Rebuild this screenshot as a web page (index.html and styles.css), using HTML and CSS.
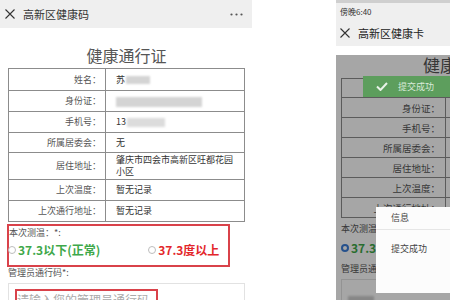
FILE: index.html
```html
<!DOCTYPE html>
<html lang="zh">
<head>
<meta charset="utf-8">
<title>健康通行证</title>
<link rel="stylesheet" href="styles.css">
</head>
<body>
<div class="screen">
  <div class="phone phone-left">
    <div class="topbar">
      <svg class="close" width="10" height="10" viewBox="0 0 10 10"><path d="M0.5 0.5 L9.5 9.5 M9.5 0.5 L0.5 9.5" stroke="#333" stroke-width="1.1" fill="none"/></svg>
      <span class="topbar-title">高新区健康码</span>
      <svg class="more" width="13" height="3" viewBox="0 0 13 3"><circle cx="1.5" cy="1.5" r="1.1" fill="#555"/><circle cx="6.5" cy="1.5" r="1.1" fill="#555"/><circle cx="11.5" cy="1.5" r="1.1" fill="#555"/></svg>
    </div>
    <div class="page">
      <h1 class="page-title">健康通行证</h1>
      <table class="info">
        <tr class="r22"><td class="lbl">姓名：</td><td class="val">苏<span class="blur blur-name"></span></td></tr>
        <tr><td class="lbl">身份证：</td><td class="val"><span class="blur blur-id"></span></td></tr>
        <tr><td class="lbl">手机号：</td><td class="val">13<span class="blur blur-phone"></span></td></tr>
        <tr class="r20"><td class="lbl">所属居委会：</td><td class="val">无</td></tr>
        <tr class="r27"><td class="lbl">居住地址：</td><td class="val">肇庆市四会市高新区旺都花园<br>小区</td></tr>
        <tr><td class="lbl">上次温度：</td><td class="val">暂无记录</td></tr>
        <tr><td class="lbl">上次通行地址：</td><td class="val">暂无记录</td></tr>
      </table>
      <div class="temp">
        <div class="field-label">本次测温：*:</div>
        <div class="temp-options">
          <span class="radio"></span><span class="opt opt-normal">37.3以下(正常)</span>
          <span class="radio radio-second"></span><span class="opt opt-high">37.3度以上</span>
        </div>
      </div>
      <div class="field-label admin-label">管理员通行码*:</div>
      <div class="input">
        <div class="input-mark">请输入您的管理员通行码</div>
      </div>
    </div>
  </div>

  <div class="phone phone-right">
    <div class="status">傍晚6:40</div>
    <div class="topbar-r">
      <svg class="close" width="10" height="10" viewBox="0 0 10 10"><path d="M0.5 0.5 L9.5 9.5 M9.5 0.5 L0.5 9.5" stroke="#333" stroke-width="1.1" fill="none"/></svg>
      <span class="topbar-title-r">高新区健康卡</span>
    </div>
    <div class="page-r">
      <h1 class="page-title-r">健康通行证</h1>
      <table class="info info-r">
        <tr class="r19"><td class="lbl lbl-r">姓名：</td><td class="val">苏</td></tr>
        <tr class="r20"><td class="lbl lbl-r">身份证：</td><td class="val"></td></tr>
        <tr class="r20"><td class="lbl lbl-r">手机号：</td><td class="val"></td></tr>
        <tr class="r20"><td class="lbl lbl-r">所属居委会：</td><td class="val">无</td></tr>
        <tr class="r20"><td class="lbl lbl-r">居住地址：</td><td class="val"></td></tr>
        <tr class="r20"><td class="lbl lbl-r">上次温度：</td><td class="val">暂无记录</td></tr>
        <tr class="r20"><td class="lbl lbl-r">上次通行地址：</td><td class="val">暂无记录</td></tr>
      </table>
      <div class="field-label temp-label-r">本次测温：*:</div>
      <div class="temp-options-r">
        <span class="radio radio-on"></span><span class="opt opt-normal">37.3以下(正常)</span>
      </div>
      <div class="field-label admin-label-r">管理员通行码*:</div>
      <div class="input-r"><span class="blur blur-input"></span></div>
      <div class="mask"></div>
    </div>
    <div class="toast">
      <svg width="12" height="9" viewBox="0 0 12 9"><path d="M1 4.5 L4.5 8 L11 1" stroke="#e8f2e8" stroke-width="2" fill="none"/></svg>
      <span class="toast-text">提交成功</span>
    </div>
    <div class="dialog">
      <div class="dialog-head">信息</div>
      <div class="dialog-body">提交成功</div>
    </div>
  </div>
</div>
</body>
</html>
```

FILE: styles.css
```css
* { box-sizing: border-box; margin: 0; padding: 0; }
html, body { width: 450px; height: 300px; overflow: hidden; background: #fff; }
body { font-family: "Noto Sans CJK SC", "Noto Sans", sans-serif; color: #333; }

.screen { display: flex; height: 300px; }
.phone { height: 300px; overflow: hidden; position: relative; flex: none; }
.phone-left { width: 252px; }
.phone-right { width: 114px; margin-left: 84px; }

/* left phone */
.topbar { height: 28px; background: #efefef; display: flex; align-items: center; padding: 0 9px 0 5px; }
.topbar-title { margin-left: 8px; font-size: 11px; color: #333; line-height: 1; }
.more { margin-left: auto; }

.page { padding: 0 7px 0 8px; }
.page-title { font-size: 16px; font-weight: normal; color: #555; text-align: center; line-height: 20px; margin: 17px 0 3px; }

.info { width: 237px; border-collapse: collapse; font-size: 9px; }
.info td { border: 1px solid #8c8c8c; line-height: 12px; vertical-align: middle; }
.info tr { height: 21px; }
.info tr.r19 { height: 19px; }
.info tr.r20 { height: 20px; }
.info tr.r22 { height: 22px; }
.info tr.r27 { height: 27px; }
.lbl { width: 97px; text-align: right; padding-right: 4px; color: #555; }
.val { padding-left: 10px; color: #333; }

.blur { display: inline-block; background: #d4d4d4; filter: blur(1.2px); vertical-align: middle; }
.blur-name { width: 24px; height: 8px; margin-left: 1px; }
.blur-id { width: 86px; height: 10px; }
.blur-phone { width: 38px; height: 9px; margin-left: 1px; background: #dcdcdc; }

.temp { margin: 2px 15px 0 -1px; border: 2px solid #d9424a; height: 43px; padding: 1px 0 0 0; }
.field-label { font-size: 9px; color: #555; line-height: 12px; }
.temp-options { display: flex; align-items: center; height: 22px; }
.radio { width: 8px; height: 8px; border: 1px solid #bdbdbd; border-radius: 50%; flex: none; margin-left: -1px; }
.radio-second { margin-left: 48px; }
.opt { font-size: 12px; font-weight: bold; line-height: 14px; margin-left: 2px; white-space: nowrap; }
.opt-normal { color: #3ea84a; }
.opt-high { color: #e3262b; }

.admin-label { margin-top: 0; }
.input { margin-top: 4px; width: 237px; height: 30px; border: 1px solid #e2e2e2; padding: 5px 0 0 6px; }
.input-mark { width: 143px; height: 24px; border: 2px solid #d9424a; border-bottom: none; font-size: 12px; line-height: 18px; color: #aaa; padding-left: 0; white-space: nowrap; }

/* right phone */
.status { height: 20px; background: #efefef; border-top: 3px solid #cfcfcf; font-size: 8px; line-height: 17px; padding-left: 4px; color: #333; }
.topbar-r { height: 26px; background: #efefef; display: flex; align-items: center; padding-left: 4px; }
.topbar-title-r { margin-left: 8px; font-size: 11px; color: #222; line-height: 1; white-space: nowrap; }

.page-r { position: relative; height: 254px; background: #fff; padding-left: 5px; width: 114px; }
.page-title-r { width: 249px; font-size: 17px; font-weight: normal; color: #555; text-align: center; line-height: 20px; margin: 9px 0 3px; white-space: nowrap; }
.info-r { width: 249px; font-size: 9.5px; }
.lbl-r { width: 104px; padding-right: 5px; white-space: nowrap; }
.temp-label-r { margin-top: 5px; white-space: nowrap; }
.temp-options-r { display: flex; align-items: center; height: 26px; }
.radio-on { border: 2px solid #3b7dd8; background: #fff; margin-left: 0; }
.admin-label-r { margin-top: 2px; white-space: nowrap; }
.input-r { margin-top: 4px; width: 200px; height: 30px; border: 1px solid #e2e2e2; padding: 6px 0 0 6px; }
.blur-input { width: 26px; height: 9px; background: #cfcfcf; }

.mask { position: absolute; inset: 0; background: rgba(0, 0, 0, 0.35); }

.toast { position: absolute; left: 27px; top: 76px; width: 120px; height: 21px; background: #5d9e5d; display: flex; align-items: center; padding-left: 13px; }
.toast-text { margin-left: 10px; font-size: 9px; color: #d9ead9; line-height: 1; }

.dialog { position: absolute; left: 40px; top: 207px; width: 110px; height: 86px; background: #fcfcfc; }
.dialog-head { height: 23px; border-bottom: 1px solid #e6e6e6; font-size: 9px; line-height: 22px; padding-left: 15px; color: #444; }
.dialog-body { font-size: 9px; line-height: 12px; padding: 13px 0 0 15px; color: #444; }
```
